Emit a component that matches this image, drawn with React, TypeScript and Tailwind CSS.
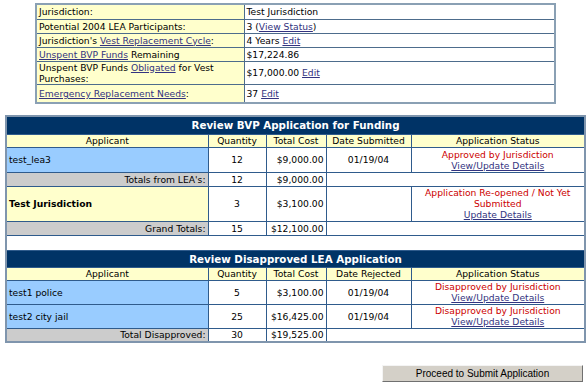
const navy = "bg-[#003366]";

type Row = {
  applicant: string;
  qty: string;
  cost: string;
  date: string;
  status: string;
  link: string;
};

const approved: Row[] = [
  {
    applicant: "test_lea3",
    qty: "12",
    cost: "$9,000.00",
    date: "01/19/04",
    status: "Approved by Jurisdiction",
    link: "View/Update Details",
  },
];

const rejected: Row[] = [
  {
    applicant: "test1 police",
    qty: "5",
    cost: "$3,100.00",
    date: "01/19/04",
    status: "Disapproved by Jurisdiction",
    link: "View/Update Details",
  },
  {
    applicant: "test2 city jail",
    qty: "25",
    cost: "$16,425.00",
    date: "01/19/04",
    status: "Disapproved by Jurisdiction",
    link: "View/Update Details",
  },
];

const cell = "border border-[#2f5b8c] px-[2px] py-0 align-middle";
const link = "text-[#333380] underline";

const Title = ({ text, h }: { text: string; h: string }) => (
  <tr className={`${h} ${navy}`}>
    <td
      colSpan={5}
      className="border border-[#2f5b8c] text-center text-[10.3px] leading-[12px] font-bold text-white"
    >
      {text}
    </td>
  </tr>
);

const Head = ({ dateLabel }: { dateLabel: string }) => (
  <tr className="h-[13px] bg-[#ffffcc]">
    <td className={`${cell} text-center`}>Applicant</td>
    <td className={`${cell} text-center`}>Quantity</td>
    <td className={`${cell} text-center`}>Total Cost</td>
    <td className={`${cell} text-center`}>{dateLabel}</td>
    <td className={`${cell} text-center`}>Application Status</td>
  </tr>
);

const AppRow = ({ r, h }: { r: Row; h: string }) => (
  <tr className={h}>
    <td className={`${cell} bg-[#99ccff]`}>{r.applicant}</td>
    <td className={`${cell} text-center`}>{r.qty}</td>
    <td className={`${cell} text-right`}>{r.cost}</td>
    <td className={`${cell} text-center`}>{r.date}</td>
    <td className={`${cell} text-center`}>
      <div className="text-[#cc0000]">{r.status}</div>
      <div className={link}>{r.link}</div>
    </td>
  </tr>
);

const TotalRow = ({
  label,
  qty,
  cost,
}: {
  label: string;
  qty: string;
  cost: string;
}) => (
  <tr className="h-[14px]">
    <td className={`${cell} bg-[#cccccc] text-right`}>{label}</td>
    <td className={`${cell} text-center`}>{qty}</td>
    <td className={`${cell} text-right`}>{cost}</td>
    <td className={cell} colSpan={2}></td>
  </tr>
);

const Cols = () => (
  <colgroup>
    <col className="w-[202px]" />
    <col className="w-[58px]" />
    <col className="w-[60px]" />
    <col className="w-[85px]" />
    <col className="w-[174px]" />
  </colgroup>
);

export default function App() {
  const top = "border border-[#4d6c8c] px-[2px] py-0 align-middle";
  return (
    <div className="h-[388px] w-[588px] overflow-hidden bg-white font-['DejaVu_Sans',Verdana,sans-serif] text-[9.2px] leading-[11px] text-black">
      <table className="mt-[3px] ml-[35px] w-[519px] table-fixed border-collapse border-2 border-[#8aa0b4]">
        <colgroup>
          <col className="w-[208px]" />
          <col className="w-[311px]" />
        </colgroup>
        <tbody>
          <tr className="h-[15px]">
            <td className={`${top} bg-[#ffffcc]`}>Jurisdiction:</td>
            <td className={top}>Test Jurisdiction</td>
          </tr>
          <tr className="h-[14px]">
            <td className={`${top} bg-[#ffffcc]`}>
              Potential 2004 LEA Participants:
            </td>
            <td className={top}>
              3 (<span className={link}>View Status</span>)
            </td>
          </tr>
          <tr className="h-[14px]">
            <td className={`${top} bg-[#ffffcc]`}>
              Jurisdiction's{" "}
              <span className={link}>Vest Replacement Cycle</span>:
            </td>
            <td className={top}>
              4 Years <span className={link}>Edit</span>
            </td>
          </tr>
          <tr className="h-[14px]">
            <td className={`${top} bg-[#ffffcc]`}>
              <span className={link}>Unspent BVP Funds</span> Remaining
            </td>
            <td className={top}>$17,224.86</td>
          </tr>
          <tr className="h-[22px]">
            <td className={`${top} bg-[#ffffcc] leading-[11px]`}>
              Unspent BVP Funds <span className={link}>Obligated</span> for
              Vest Purchases:
            </td>
            <td className={top}>
              $17,000.00 <span className={link}>Edit</span>
            </td>
          </tr>
          <tr className="h-[19px]">
            <td className={`${top} bg-[#ffffcc]`}>
              <span className={link}>Emergency Replacement Needs</span>:
            </td>
            <td className={top}>
              37 <span className={link}>Edit</span>
            </td>
          </tr>
        </tbody>
      </table>

      <table className="mt-[11px] ml-[5px] w-[579px] table-fixed border-collapse border-2 border-[#7f95ad]">
        <Cols />
        <tbody>
          <Title text="Review BVP Application for Funding" h="h-[18px]" />
          <Head dateLabel="Date Submitted" />
          {approved.map((r) => (
            <AppRow key={r.applicant} r={r} h="h-[25px]" />
          ))}
          <TotalRow label="Totals from LEA's:" qty="12" cost="$9,000.00" />
          <tr className="h-[35px]">
            <td className={`${cell} bg-[#ffffcc] font-bold`}>
              Test Jurisdiction
            </td>
            <td className={`${cell} text-center`}>3</td>
            <td className={`${cell} text-right`}>$3,100.00</td>
            <td className={cell}></td>
            <td className={`${cell} text-center`}>
              <div className="text-[#cc0000]">
                Application Re-opened / Not Yet Submitted
              </div>
              <div className={link}>Update Details</div>
            </td>
          </tr>
          <TotalRow label="Grand Totals:" qty="15" cost="$12,100.00" />
          <tr className="h-[15px]">
            <td colSpan={5} className="border-x border-[#2f5b8c]"></td>
          </tr>
          <Title text="Review Disapproved LEA Application" h="h-[17px]" />
          <Head dateLabel="Date Rejected" />
          {rejected.map((r) => (
            <AppRow key={r.applicant} r={r} h="h-[24px]" />
          ))}
          <TotalRow label="Total Disapproved:" qty="30" cost="$19,525.00" />
        </tbody>
      </table>

      <div className="mt-[22px] flex justify-end pr-[5px]">
        <button className="block h-[17px] w-[201px] border border-t-[#f4f4f4] border-l-[#f4f4f4] border-r-[#707070] border-b-[#707070] bg-[#d4d0c8] font-['Liberation_Sans',Arial,sans-serif] text-[10px] leading-[15px] text-black">
          Proceed to Submit Application
        </button>
      </div>
    </div>
  );
}
